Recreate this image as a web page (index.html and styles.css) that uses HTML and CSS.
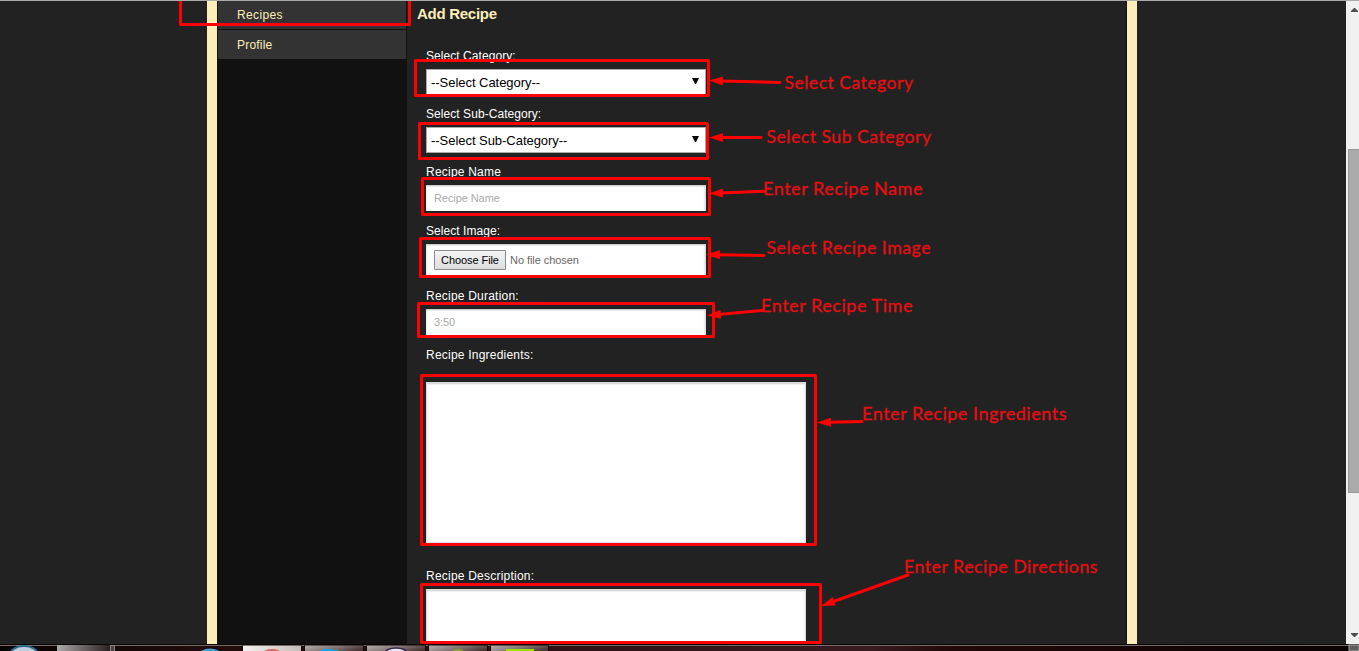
FILE: index.html
```html
<!DOCTYPE html>
<html lang="en">
<head>
<meta charset="utf-8">
<title>Add Recipe</title>
<link rel="stylesheet" href="styles.css">
</head>
<body>
<div class="screen">
  <div class="viewport">
    <div class="page">
      <nav class="sidebar">
        <a class="nav-item nav-first">Recipes</a>
        <a class="nav-item">Profile</a>
      </nav>
      <main class="content">
        <h1 class="title">Add Recipe</h1>
        <form class="form">
          <div class="row"><label class="label">Select Category:</label>
            <div class="field select"><span>--Select Category--</span><svg class="caret" width="7" height="7" viewBox="0 0 7 7"><path d="M0 0H7L4 6H3Z"/></svg></div></div>
          <div class="row"><label class="label">Select Sub-Category:</label>
            <div class="field select"><span>--Select Sub-Category--</span><svg class="caret" width="7" height="7" viewBox="0 0 7 7"><path d="M0 0H7L4 6H3Z"/></svg></div></div>
          <div class="row row-text"><label class="label wide">Recipe Name</label>
            <div class="field input">Recipe Name</div></div>
          <div class="row row-text"><label class="label">Select Image:</label>
            <div class="field input file"><span class="choose">Choose File</span><span class="nofile">No file chosen</span></div></div>
          <div class="row row-text"><label class="label wide">Recipe Duration:</label>
            <div class="field input">3:50</div></div>
          <div class="row row-area"><label class="label wide">Recipe Ingredients:</label>
            <div class="area"></div></div>
          <div class="row"><label class="label wide">Recipe Description:</label>
            <div class="area"></div></div>
        </form>
      </main>
    </div>
    <div class="scrollbar">
      <svg class="arrow" width="7" height="4" viewBox="0 0 7 4"><path d="M0 4H7V3L4 0H3L0 3Z"/></svg>
      <div class="thumb"></div>
      <svg class="arrow" width="7" height="4" viewBox="0 0 7 4"><path d="M0 0H7V1L4 4H3L0 1Z"/></svg>
    </div>
  </div>
  <div class="taskbar">
    <svg width="1359" height="7" viewBox="0 0 1359 7">
      <defs>
        <linearGradient id="bar"><stop offset="0" stop-color="#080202"/><stop offset=".15" stop-color="#200c0b"/><stop offset=".4" stop-color="#2c1012"/><stop offset=".64" stop-color="#381c20"/><stop offset=".7" stop-color="#220808"/><stop offset="1" stop-color="#0a0303"/></linearGradient>
        <linearGradient id="tab" x2="1" y2=".5"><stop offset="0" stop-color="#b8b0b0"/><stop offset=".5" stop-color="#897c7b"/><stop offset="1" stop-color="#4a3735"/></linearGradient>
        <linearGradient id="lit"><stop offset="0" stop-color="#f4f2f2"/><stop offset="1" stop-color="#c5bbba"/></linearGradient>
        <linearGradient id="dim"><stop offset="0" stop-color="#aaa"/><stop offset="1" stop-color="#2b2020"/></linearGradient>
      </defs>
      <rect width="1359" height="7" fill="url(#bar)"/>
      <rect width="1359" height="1" fill="#0b0707"/>
      <rect y="1" width="1359" height="1" fill="#746b69"/>
      <ellipse cx="24" cy="11" rx="14" ry="9" fill="#bfd0de" stroke="#2d6b8d" stroke-width="2"/>
      <rect x="57" y="1" width="53" height="6" fill="url(#dim)"/>
      <rect x="110.500" y="1.500" width="4" height="6" fill="#4b4343" stroke="#8a8282"/>
      <ellipse cx="210" cy="10.500" rx="11" ry="6" fill="#3aa3d8"/>
      <g stroke="#120707">
        <rect x="242.500" y="1" width="59" height="8" rx="1" fill="url(#lit)"/>
        <rect x="304.500" y="1" width="59" height="8" rx="1" fill="url(#tab)"/>
        <rect x="366.500" y="1" width="59" height="8" rx="1" fill="url(#tab)"/>
        <rect x="428.500" y="1" width="59" height="8" rx="1" fill="url(#tab)"/>
        <rect x="490.500" y="1" width="58" height="8" rx="1" fill="url(#tab)"/>
      </g>
      <ellipse cx="272" cy="9" rx="9" ry="4" fill="#e0655b"/>
      <path d="M321 7L323 5H331L333 6H340L337 7Z" fill="#12a5e4"/>
      <ellipse cx="396" cy="9" rx="11" ry="5" fill="#e8e6f0" stroke="#34254b" stroke-width="1.500"/>
      <ellipse cx="458" cy="8" rx="6" ry="3" fill="#86aa22"/>
      <rect x="506" y="5" width="28" height="2" fill="#9be400"/>
      <rect x="1349" y="1" width="10" height="6" fill="#625c5c" stroke="#aaa"/>
    </svg>
  </div>

  <!-- Callout boxes, arrows and captions laid over the form -->
  <svg class="callouts" width="1359" height="651" viewBox="0 0 1359 651">
    <defs>
      <marker id="head" viewBox="0 0 14 9" refX="14" refY="4.500" markerWidth="14" markerHeight="9" markerUnits="userSpaceOnUse" orient="auto"><path class="tip" d="M14 4.500L0 0V9Z"/></marker>
    </defs>
    <g class="box">
      <path d="M180.500 1V24.500H409.500V1"/>
      <rect x="415.500" y="60.500" width="293" height="35"/>
      <rect x="419.500" y="123.500" width="288" height="35"/>
      <rect x="422.500" y="178.500" width="287" height="36"/>
      <rect x="420.500" y="238.500" width="289" height="38"/>
      <rect x="418.500" y="303.500" width="295" height="33"/>
      <rect x="421.500" y="375.500" width="394" height="169"/>
      <rect x="421.500" y="584.500" width="399" height="58"/>
    </g>
    <g class="shaft">
      <path d="M780 82.500L720 80.900"/><path d="M761 137.500H720"/><path d="M764 191.300L720 193"/>
      <path d="M764 255.500L717 254.700"/><path d="M762 310.500L718 314.500"/><path d="M862 421.600L828 422.200"/><path d="M908 575L832 602"/>
    </g>
    <g class="pointer">
      <path marker-end="url(#head)" d="M780 82.500L709 80.500"/><path marker-end="url(#head)" d="M761 137.500H709"/><path marker-end="url(#head)" d="M764 191.300L709 193.500"/>
      <path marker-end="url(#head)" d="M764 255.500L706 254.500"/><path marker-end="url(#head)" d="M762 310.500L707 315.500"/><path marker-end="url(#head)" d="M862 421.600L817 422.500"/><path marker-end="url(#head)" d="M908 575L821 606"/>
    </g>
    <g class="caption">
      <text x="784.500" y="89" textLength="129" lengthAdjust="spacingAndGlyphs">Select Category</text>
      <text x="766.500" y="143" textLength="165" lengthAdjust="spacingAndGlyphs">Select Sub Category</text>
      <text x="763" y="195" textLength="160" lengthAdjust="spacingAndGlyphs">Enter Recipe Name</text>
      <text x="766.500" y="254" textLength="164.500" lengthAdjust="spacingAndGlyphs">Select Recipe Image</text>
      <text x="761" y="312" textLength="152" lengthAdjust="spacingAndGlyphs">Enter Recipe Time</text>
      <text x="862" y="420" textLength="205" lengthAdjust="spacingAndGlyphs">Enter Recipe Ingredients</text>
      <text x="904" y="573" textLength="194" lengthAdjust="spacingAndGlyphs">Enter Recipe Directions</text>
    </g>
  </svg>
</div>
</body>
</html>
```
FILE: styles.css
```css
* { box-sizing: border-box; }
body { margin: 0; overflow: hidden; font-family: "Liberation Sans", Arial, sans-serif; }
.screen { position: relative; display: flex; flex-direction: column; width: 1359px; height: 651px; overflow: hidden; background: #222; }
.viewport { display: flex; height: 644px; border-top: 1px solid #aaa; overflow: hidden; }
.page { display: flex; width: 930px; margin-left: 207px; border: solid #fdeeb9; border-width: 0 10px; }
.sidebar { display: flex; flex-direction: column; gap: 1px; width: 190px; padding-right: 1px; padding-left: 1px; background: #111; }
.nav-item { height: 29px; padding-left: 19px; background: #333; color: #fdeeb9; font-size: 12px; line-height: 31px; letter-spacing: .2px; }
.nav-first { height: 28px; line-height: 29px; letter-spacing: .35px; }
.content { flex: 1; padding: 4px 0 0 10px; border-right: 1px solid #111; }
.title { margin: 0; color: #fdeeb9; font-size: 15px; line-height: 18px; letter-spacing: -.28px; }
.form { padding: 25px 0 0 9px; }
.row { display: flex; flex-direction: column; gap: 5px; margin-bottom: 11px; }
.row-text { margin-bottom: 12px; }
.row-area { gap: 19px; margin-bottom: 25px; }
.label { height: 16px; color: #fff; font-size: 12px; line-height: 17px; letter-spacing: .06px; }
.wide { letter-spacing: .22px; }
.field { display: flex; align-items: center; width: 280px; height: 26px; background: #fff; }
.select { justify-content: space-between; padding: 1px 6px 0 4px; border: 1px solid #aaa; color: #000; font-size: 13px; letter-spacing: -.04px; }
.caret { margin-top: -3px; }
.input { padding-left: 8px; border: 0 solid #ddd; border-right-width: 1px; box-shadow: inset 0 1px 2px #bbb; color: #aaa; font-size: 11px; letter-spacing: -.08px; }
.file { height: 32px; gap: 4px; }
.choose { flex: none; width: 72px; height: 20px; border: 1px solid #8c8c8c; border-radius: 1px; background: linear-gradient(#f5f5f5, #ddd); color: #000; line-height: 18px; text-align: center; }
.nofile { color: #666; letter-spacing: -.06px; }
.area { width: 380px; height: 161px; background: #fff; border: 1px solid #ddd; box-shadow: inset 0 1px 2px #ccc; }
.scrollbar { display: flex; flex-direction: column; align-items: flex-end; justify-content: space-between; width: 13px; margin-left: auto; padding: 7px 1px 7px 0; background: #f0f0f0; }
.thumb { width: 11px; height: 344px; margin: -3px -1px 0 0; background: #aaa; border: 1px solid #999; border-right: 0; }
.arrow { fill: #505050; }
.taskbar { height: 7px; line-height: 0; }
.callouts { position: absolute; top: 0; left: 0; }
.box { fill: none; stroke: red; stroke-width: 3; stroke-linejoin: round; }
.shaft { fill: none; stroke: red; stroke-width: 3; stroke-linecap: round; }
.pointer { fill: none; stroke: none; }
.tip { fill: red; }
.caption { fill: #e60f12; stroke: #e60f12; stroke-width: .3; font-family: Lato, sans-serif; font-size: 18px; letter-spacing: .5px; }
```
